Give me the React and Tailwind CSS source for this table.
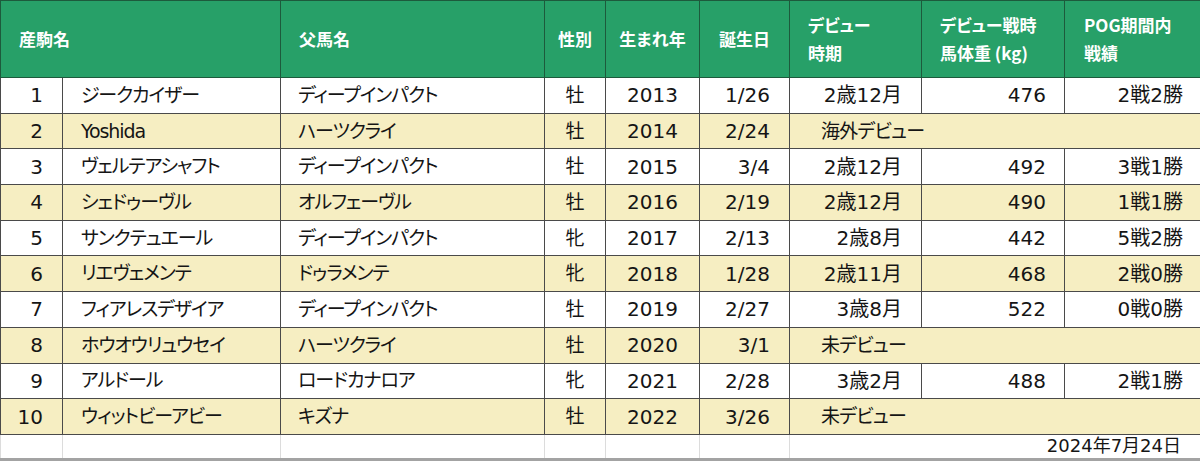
const rows = [
  { no: 1, name: 'ジークカイザー', sire: 'ディープインパクト', sex: '牡', year: 2013, birth: '1/26', debut: '2歳12月', weight: 476, record: '2戦2勝' },
  { no: 2, name: 'Yoshida', sire: 'ハーツクライ', sex: '牡', year: 2014, birth: '2/24', note: '海外デビュー' },
  { no: 3, name: 'ヴェルテアシャフト', sire: 'ディープインパクト', sex: '牡', year: 2015, birth: '3/4', debut: '2歳12月', weight: 492, record: '3戦1勝' },
  { no: 4, name: 'シェドゥーヴル', sire: 'オルフェーヴル', sex: '牡', year: 2016, birth: '2/19', debut: '2歳12月', weight: 490, record: '1戦1勝' },
  { no: 5, name: 'サンクテュエール', sire: 'ディープインパクト', sex: '牝', year: 2017, birth: '2/13', debut: '2歳8月', weight: 442, record: '5戦2勝' },
  { no: 6, name: 'リエヴェメンテ', sire: 'ドゥラメンテ', sex: '牝', year: 2018, birth: '1/28', debut: '2歳11月', weight: 468, record: '2戦0勝' },
  { no: 7, name: 'フィアレスデザイア', sire: 'ディープインパクト', sex: '牡', year: 2019, birth: '2/27', debut: '3歳8月', weight: 522, record: '0戦0勝' },
  { no: 8, name: 'ホウオウリュウセイ', sire: 'ハーツクライ', sex: '牡', year: 2020, birth: '3/1', note: '未デビュー' },
  { no: 9, name: 'アルドール', sire: 'ロードカナロア', sex: '牝', year: 2021, birth: '2/28', debut: '3歳2月', weight: 488, record: '2戦1勝' },
  { no: 10, name: 'ウィットビーアビー', sire: 'キズナ', sex: '牡', year: 2022, birth: '3/26', note: '未デビュー' },
];

const widths = [62, 218, 264, 61, 94, 90, 132, 143, 136];

function App() {
  return (
    <div className="w-[1200px] h-[462px] overflow-hidden bg-white font-['DejaVu_Sans','Noto_Sans_CJK_JP',sans-serif] [font-feature-settings:'palt'] text-[#151515]">
      <table className="w-[1200px] table-fixed border-collapse">
        <colgroup>
          {widths.map((w, i) => (
            <col key={i} style={{ width: w }} />
          ))}
        </colgroup>
        <thead>
          <tr className="h-[77px] bg-[#27a068] text-white text-[17px] font-bold leading-[28px] font-['Noto_Sans_CJK_JP',sans-serif]">
            <th colSpan={2} className="border border-[#1d5a3c] pl-[18px] text-left">産駒名</th>
            <th className="border border-[#1d5a3c] pl-[18px] text-left">父馬名</th>
            <th className="border border-[#1d5a3c] text-center">性別</th>
            <th className="border border-[#1d5a3c] text-center">生まれ年</th>
            <th className="border border-[#1d5a3c] text-center">誕生日</th>
            <th className="border border-[#1d5a3c] pl-[18px] text-left">デビュー<br />時期</th>
            <th className="border border-[#1d5a3c] pl-[18px] text-left">デビュー戦時<br />馬体重 (kg)</th>
            <th className="border border-[#1d5a3c] pl-[19px] text-left">POG期間内<br />戦績</th>
          </tr>
        </thead>
        <tbody className="text-[20px] leading-none">
          {rows.map((r) => {
            const bg = r.no % 2 === 0 ? 'bg-[#f6eec2]' : 'bg-white';
            return (
              <tr key={r.no} className={`h-[35.7px] ${bg}`}>
                <td className="border border-[#4a4a4a] pr-[19px] text-right">{r.no}</td>
                <td className="border border-[#4a4a4a] pl-[18px] text-[19px] tracking-[-1.1px]">{r.name}</td>
                <td className="border border-[#4a4a4a] pl-[17px] text-[19px] tracking-[-1.1px]">{r.sire}</td>
                <td className="border border-[#4a4a4a] text-center text-[19px]">{r.sex}</td>
                <td className="border border-[#4a4a4a] text-center">{r.year}</td>
                <td className="border border-[#4a4a4a] pr-[19px] text-right">{r.birth}</td>
                {r.note ? (
                  <td colSpan={3} className="border border-[#4a4a4a] border-r-[#a0a0a0] pl-[31px] text-[19px] tracking-[-0.8px]">{r.note}</td>
                ) : (
                  <>
                    <td className="border border-[#4a4a4a] pr-[19px] text-right">{r.debut}</td>
                    <td className="border border-[#4a4a4a] pr-[18px] text-right">{r.weight}</td>
                    <td className="border border-[#4a4a4a] border-r-[#a0a0a0] pr-[17px] text-right">{r.record}</td>
                  </>
                )}
              </tr>
            );
          })}
          <tr className="h-[25px] bg-white border-b-[3px] border-b-[#a3a3a3]">
            {widths.slice(0, 6).map((w, i) => (
              <td key={i} className="border-x border-[#dcdcdc]" />
            ))}
            <td colSpan={3} className="border-x border-[#dcdcdc] border-r-[#a0a0a0] pr-[19px] text-right text-[18px]">2024年7月24日</td>
          </tr>
        </tbody>
      </table>
    </div>
  );
}

export default App;
